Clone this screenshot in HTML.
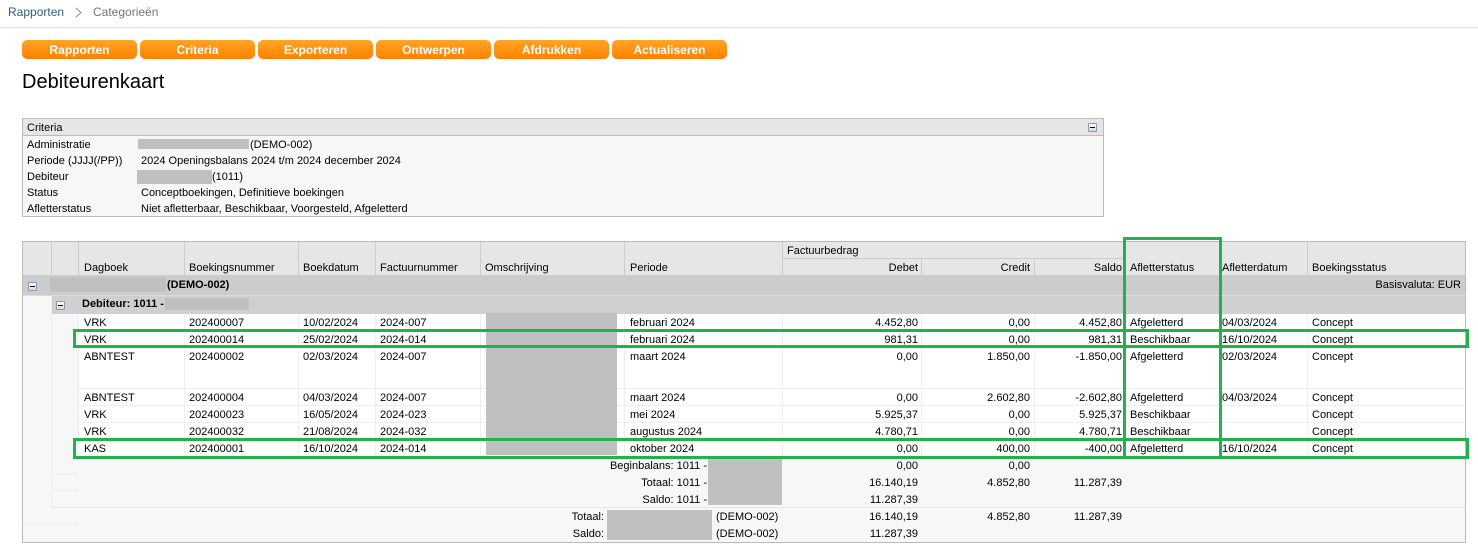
<!DOCTYPE html>
<html><head><meta charset="utf-8"><title>Debiteurenkaart</title>
<style>
html,body{margin:0;padding:0;background:#fff;width:1478px;height:550px;overflow:hidden}
body{position:relative;font-family:"Liberation Sans",Arial,sans-serif;font-size:11px;color:#000}
.a{position:absolute;white-space:nowrap}
.crumb{font-size:12px;top:5px;line-height:14px}
.btn{position:absolute;top:40px;height:19px;width:115px;border-radius:5px;background:linear-gradient(#ffa526,#ff8000);color:#fff;font-weight:bold;font-size:12px;line-height:20px;text-align:center}
.g{position:absolute;background:#c0c0c0}
.l{position:absolute;background:#ddd}
.r{position:absolute;left:0;width:1478px;height:17px;line-height:19px}
.r span{position:absolute;top:0;white-space:nowrap}
.c1{left:84px}.c2{left:189px}.c3{left:303px}.c4{left:380px}.c5{left:485px}.c6{left:630px}
.c7{right:560px}.c8{right:448px}.c9{right:356px}.c10{left:1130px}.c11{left:1222px}.c12{left:1312px}
.t{position:absolute;white-space:nowrap;line-height:16px}
.mini{position:absolute;width:7px;height:7px;border:1px solid #7f9db9;border-radius:1px;background:linear-gradient(#fff,#dcd8c8)}
.mini:after{content:"";position:absolute;left:1px;top:3px;width:5px;height:1px;background:#000}
.h{position:absolute;background:#e6e6e6}
.green{position:absolute;border:3px solid #22b14c;box-sizing:border-box}
</style></head><body>

<div class="a crumb" style="left:8px;color:#2f5d7c">Rapporten</div>
<svg class="a" style="left:74px;top:7px" width="9" height="11"><path d="M2 1 L7 5.5 L2 10" fill="none" stroke="#888" stroke-width="1"/></svg>
<div class="a crumb" style="left:93px;color:#777">Categorieën</div>
<div class="a" style="left:0;top:27px;width:1478px;height:1px;background:#ddd"></div>

<div class="btn" style="left:22px">Rapporten</div>
<div class="btn" style="left:140px">Criteria</div>
<div class="btn" style="left:258px">Exporteren</div>
<div class="btn" style="left:376px">Ontwerpen</div>
<div class="btn" style="left:494px">Afdrukken</div>
<div class="btn" style="left:612px">Actualiseren</div>

<div class="a" style="left:22px;top:71px;font-size:20px;line-height:23px">Debiteurenkaart</div>

<!-- Criteria -->
<div class="a" style="left:22px;top:118px;width:1080px;height:97px;border:1px solid #bbb;background:#f7f7f7"></div>
<div class="a" style="left:23px;top:119px;width:1080px;height:16px;background:#e6e6e6;border-bottom:1px solid #bbb"></div>
<div class="t" style="left:27px;top:120px">Criteria</div>
<div class="mini" style="left:1088px;top:123px"></div>
<div class="t" style="left:27px;top:137px">Administratie</div>
<div class="g" style="left:138px;top:139px;width:111px;height:10px"></div>
<div class="t" style="left:250px;top:137px">(DEMO-002)</div>
<div class="t" style="left:27px;top:153px">Periode (JJJJ(/PP))</div>
<div class="t" style="left:141px;top:153px">2024 Openingsbalans 2024 t/m 2024 december 2024</div>
<div class="t" style="left:27px;top:169px">Debiteur</div>
<div class="g" style="left:137px;top:170px;width:75px;height:14px"></div>
<div class="t" style="left:212px;top:169px">(1011)</div>
<div class="t" style="left:27px;top:185px">Status</div>
<div class="t" style="left:141px;top:185px">Conceptboekingen, Definitieve boekingen</div>
<div class="t" style="left:27px;top:201px">Afletterstatus</div>
<div class="t" style="left:141px;top:201px">Niet afletterbaar, Beschikbaar, Voorgesteld, Afgeletterd</div>

<!-- Report table -->
<div class="a" style="left:22px;top:241px;width:1442px;height:300px;border:1px solid #bbb;background:#f7f7f7"></div>
<div class="h" style="left:23px;top:242px;width:1442px;height:33px"></div>
<div class="a" style="left:23px;top:275px;width:1442px;height:1px;background:#ccc"></div>
<div class="a" style="left:23px;top:276px;width:1442px;height:19px;background:#ccc"></div>
<div class="a" style="left:51px;top:296px;width:1414px;height:18px;background:#d0d0d0"></div>
<div class="a" style="left:23px;top:295px;width:1442px;height:1px;background:#ddd"></div>
<div class="a" style="left:79px;top:314px;width:1386px;height:143px;background:#fff"></div>

<!-- header lines -->
<div class="l" style="left:51px;top:242px;width:1px;height:33px;background:#ccc"></div>
<div class="l" style="left:78px;top:242px;width:1px;height:33px;background:#ccc"></div>
<div class="l" style="left:184px;top:242px;width:1px;height:33px;background:#ccc"></div>
<div class="l" style="left:298px;top:242px;width:1px;height:33px;background:#ccc"></div>
<div class="l" style="left:375px;top:242px;width:1px;height:33px;background:#ccc"></div>
<div class="l" style="left:480px;top:242px;width:1px;height:33px;background:#ccc"></div>
<div class="l" style="left:624px;top:242px;width:1px;height:33px;background:#ccc"></div>
<div class="l" style="left:782px;top:242px;width:1px;height:33px;background:#ccc"></div>
<div class="l" style="left:783px;top:258px;width:342px;height:1px;background:#ccc"></div>
<div class="l" style="left:921px;top:259px;width:1px;height:16px;background:#ccc"></div>
<div class="l" style="left:1034px;top:259px;width:1px;height:16px;background:#ccc"></div>
<div class="l" style="left:1125px;top:242px;width:1px;height:33px;background:#ccc"></div>
<div class="l" style="left:1307px;top:242px;width:1px;height:33px;background:#ccc"></div>

<!-- body lines -->
<div class="l" style="left:184px;top:314px;width:1px;height:143px;background:#eee"></div>
<div class="l" style="left:298px;top:314px;width:1px;height:143px;background:#eee"></div>
<div class="l" style="left:375px;top:314px;width:1px;height:143px;background:#eee"></div>
<div class="l" style="left:480px;top:314px;width:1px;height:143px;background:#eee"></div>
<div class="l" style="left:624px;top:314px;width:1px;height:143px;background:#eee"></div>
<div class="l" style="left:782px;top:314px;width:1px;height:143px;background:#eee"></div>
<div class="l" style="left:921px;top:314px;width:1px;height:143px;background:#eee"></div>
<div class="l" style="left:1034px;top:314px;width:1px;height:143px;background:#eee"></div>
<div class="l" style="left:1125px;top:314px;width:1px;height:143px;background:#eee"></div>
<div class="l" style="left:1307px;top:314px;width:1px;height:143px;background:#eee"></div>
<div class="l" style="left:79px;top:331px;width:1386px;height:1px;background:#eee"></div>
<div class="l" style="left:79px;top:348px;width:1386px;height:1px;background:#eee"></div>
<div class="l" style="left:79px;top:388px;width:1386px;height:1px;background:#eee"></div>
<div class="l" style="left:79px;top:405px;width:1386px;height:1px;background:#eee"></div>
<div class="l" style="left:79px;top:422px;width:1386px;height:1px;background:#eee"></div>
<div class="l" style="left:79px;top:439px;width:1386px;height:1px;background:#eee"></div>
<div class="l" style="left:51px;top:296px;width:1px;height:211px;background:#eee"></div>
<div class="l" style="left:78px;top:314px;width:1px;height:143px;background:#eee"></div>
<div class="l" style="left:51px;top:507px;width:1414px;height:1px;background:#e6e6e6"></div>
<div class="l" style="left:51px;top:473px;width:27px;height:1px;background:#eee"></div>
<div class="l" style="left:51px;top:490px;width:27px;height:1px;background:#eee"></div>
<div class="l" style="left:23px;top:524px;width:55px;height:1px;background:#eee"></div>

<!-- header text -->
<div class="t" style="left:787px;top:243px">Factuurbedrag</div>
<div class="r" style="top:259px">
<span class="c1">Dagboek</span><span class="c2">Boekingsnummer</span><span class="c3">Boekdatum</span><span class="c4">Factuurnummer</span><span class="c5">Omschrijving</span><span class="c6">Periode</span><span class="c7">Debet</span><span class="c8">Credit</span><span class="c9">Saldo</span><span class="c10">Afletterstatus</span><span class="c11">Afletterdatum</span><span class="c12">Boekingsstatus</span>
</div>

<!-- groups -->
<div class="mini" style="left:28px;top:282px"></div>
<div class="g" style="left:50px;top:277px;width:116px;height:15px"></div>
<div class="t" style="left:167px;top:277px;font-weight:bold">(DEMO-002)</div>
<div class="t" style="right:17px;top:277px">Basisvaluta: EUR</div>
<div class="mini" style="left:56px;top:301px"></div>
<div class="t" style="left:82px;top:296px;font-weight:bold">Debiteur: 1011 -</div>
<div class="g" style="left:165px;top:298px;width:84px;height:12px"></div>

<!-- rows -->
<div class="r" style="top:314px"><span class="c1">VRK</span><span class="c2">202400007</span><span class="c3">10/02/2024</span><span class="c4">2024-007</span><span class="c6">februari 2024</span><span class="c7">4.452,80</span><span class="c8">0,00</span><span class="c9">4.452,80</span><span class="c10">Afgeletterd</span><span class="c11">04/03/2024</span><span class="c12">Concept</span></div>
<div class="r" style="top:331px"><span class="c1">VRK</span><span class="c2">202400014</span><span class="c3">25/02/2024</span><span class="c4">2024-014</span><span class="c6">februari 2024</span><span class="c7">981,31</span><span class="c8">0,00</span><span class="c9">981,31</span><span class="c10">Beschikbaar</span><span class="c11">16/10/2024</span><span class="c12">Concept</span></div>
<div class="r" style="top:348px"><span class="c1">ABNTEST</span><span class="c2">202400002</span><span class="c3">02/03/2024</span><span class="c4">2024-007</span><span class="c6">maart 2024</span><span class="c7">0,00</span><span class="c8">1.850,00</span><span class="c9">-1.850,00</span><span class="c10">Afgeletterd</span><span class="c11">02/03/2024</span><span class="c12">Concept</span></div>
<div class="r" style="top:389px"><span class="c1">ABNTEST</span><span class="c2">202400004</span><span class="c3">04/03/2024</span><span class="c4">2024-007</span><span class="c6">maart 2024</span><span class="c7">0,00</span><span class="c8">2.602,80</span><span class="c9">-2.602,80</span><span class="c10">Afgeletterd</span><span class="c11">04/03/2024</span><span class="c12">Concept</span></div>
<div class="r" style="top:406px"><span class="c1">VRK</span><span class="c2">202400023</span><span class="c3">16/05/2024</span><span class="c4">2024-023</span><span class="c6">mei 2024</span><span class="c7">5.925,37</span><span class="c8">0,00</span><span class="c9">5.925,37</span><span class="c10">Beschikbaar</span><span class="c12">Concept</span></div>
<div class="r" style="top:423px"><span class="c1">VRK</span><span class="c2">202400032</span><span class="c3">21/08/2024</span><span class="c4">2024-032</span><span class="c6">augustus 2024</span><span class="c7">4.780,71</span><span class="c8">0,00</span><span class="c9">4.780,71</span><span class="c10">Beschikbaar</span><span class="c12">Concept</span></div>
<div class="r" style="top:440px"><span class="c1">KAS</span><span class="c2">202400001</span><span class="c3">16/10/2024</span><span class="c4">2024-014</span><span class="c6">oktober 2024</span><span class="c7">0,00</span><span class="c8">400,00</span><span class="c9">-400,00</span><span class="c10">Afgeletterd</span><span class="c11">16/10/2024</span><span class="c12">Concept</span></div>

<!-- totals -->
<div class="r" style="top:457px"><span style="right:771px">Beginbalans: 1011 -</span><span class="c7">0,00</span><span class="c8">0,00</span></div>
<div class="r" style="top:474px"><span style="right:771px">Totaal: 1011 -</span><span class="c7">16.140,19</span><span class="c8">4.852,80</span><span class="c9">11.287,39</span></div>
<div class="r" style="top:491px"><span style="right:771px">Saldo: 1011 -</span><span class="c7">11.287,39</span></div>
<div class="r" style="top:508px"><span style="right:874px">Totaal:</span><span style="left:716px">(DEMO-002)</span><span class="c7">16.140,19</span><span class="c8">4.852,80</span><span class="c9">11.287,39</span></div>
<div class="r" style="top:525px"><span style="right:874px">Saldo:</span><span style="left:716px">(DEMO-002)</span><span class="c7">11.287,39</span></div>

<!-- redactions -->
<div class="g" style="left:486px;top:313px;width:131px;height:142px"></div>
<div class="g" style="left:708px;top:459px;width:74px;height:46px"></div>
<div class="g" style="left:607px;top:510px;width:105px;height:30px"></div>

<!-- annotations -->
<div class="green" style="left:1123px;top:237px;width:99px;height:222px"></div>
<div class="green" style="left:73px;top:329px;width:1396px;height:19px"></div>
<div class="green" style="left:73px;top:438px;width:1396px;height:21px"></div>

</body></html>
